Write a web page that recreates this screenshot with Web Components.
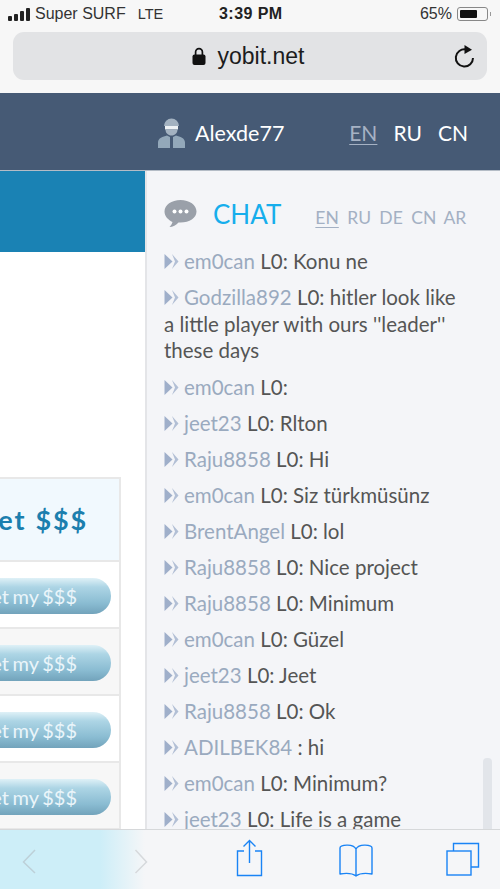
<!DOCTYPE html>
<html><head><meta charset="utf-8"><style>
html,body{margin:0;padding:0;height:889px;overflow:hidden;background:#fff}
body{font-family:Lato,"Liberation Sans",sans-serif}
</style></head><body>
<phone-page></phone-page>
<script>
function def(name,html){customElements.define(name,class extends HTMLElement{constructor(){super();this.attachShadow({mode:'open'}).innerHTML=html}})}
def('status-bar',`<style>
:host{display:flex;align-items:center;height:28px;padding:0 12px 0 8px;font:16px "Liberation Sans",sans-serif;color:#333;position:relative}
.sig{display:flex;align-items:flex-end;gap:2px;height:13px;margin-right:5px;width:22px}.sig i{width:4px;background:#222;border-radius:1px}
.t{position:absolute;left:219px;top:5px;font-weight:700;color:#222;font-size:16px;letter-spacing:.45px}
.r{margin-left:auto;display:flex;align-items:center;gap:5px}
.lte{margin-left:12px;font-size:14.5px}
.bat{width:31px;height:14px;border:1px solid #888;border-radius:3px;box-sizing:border-box;padding:2px;position:relative}
.bat i{display:block;height:100%;width:68%;background:#111;border-radius:1px}
.bat:after{content:"";position:absolute;right:-4px;top:4px;width:1px;height:4px;background:#999}
</style><span class="sig"><i style="height:5px"></i><i style="height:7px"></i><i style="height:10px"></i><i style="height:13px"></i></span><span>Super SURF</span><span class="lte">LTE</span><span class="t">3:39 PM</span><span class="r">65%<span class="bat"><i></i></span></span>`);
def('url-bar',`<style>
:host{display:block;height:65px;padding:4px 13px 0;box-sizing:border-box}
.b{height:48px;background:#e2e3e5;border-radius:11px;display:flex;align-items:center;justify-content:center;position:relative;font:23px "Liberation Sans",sans-serif;color:#1c1c1c;gap:12px;padding-right:4px}
svg{display:block}.re{position:absolute;right:12px;top:12px}
</style><div class="b"><svg width="14" height="20" viewBox="0 0 14 20"><path d="M3.6 9V6a3.4 3.4 0 0 1 6.8 0v3" fill="none" stroke="#111" stroke-width="1.7"/><rect x="0.5" y="8.500" width="13" height="10.500" rx="2" fill="#111"/></svg><span>yobit.net</span><svg class="re" width="22" height="24" viewBox="0 0 22 24"><path d="M13 5.500A8.600 8.600 0 1 0 20 14" fill="none" stroke="#111" stroke-width="2"/><path d="M11.500 1 19 5.800 11.500 10z" fill="#111"/></svg></div>`);
def('site-header',`<style>
:host{display:flex;align-items:center;height:78px;box-sizing:border-box;background:#465a75;color:#fff;padding:2px 32px 0 157px;font:22px Lato,sans-serif;border-bottom:1px solid #b4bcc6}
svg{margin-right:9px}.n{margin-right:auto;font-size:21.5px}
a{margin-left:16px;font-size:21px}a.on{color:#a6b2c4;text-decoration:underline;text-underline-offset:3px;text-decoration-thickness:1px}
</style><svg width="29" height="30" viewBox="0 0 29 30"><path d="M7 8a7.500 7.500 0 0 1 15 0z" fill="#a3b2c1"/><path d="M8 8h13v3.500H8z" fill="#eef2f5"/><path d="M8.500 11.500h12c0 3.500-2.500 6-6 6s-6-2.500-6-6z" fill="#a3b2c1"/><path d="M1 30v-5.500c0-4.500 5-6 9-7l3 1.500v11zM28 30v-5.500c0-4.500-5-6-9-7l-3 1.500v11z" fill="#93a8ba"/></svg><span class="n">Alexde77</span><a class="on">EN</a><a>RU</a><a>CN</a>`);
def('get-row',`<style>
:host{display:flex;justify-content:flex-end;align-items:center;height:67px;box-sizing:border-box;width:121px;border-right:2px solid #e8e8e8;border-bottom:2px solid #e8e8e8;padding:3px 8px 0 0;overflow:hidden;background:var(--bg,#fff)}
.btn{flex:none;width:160px;height:36px;border-radius:18px;background:linear-gradient(#dff1f7 0,#add5e5 25%,#8abcd2 70%,#72a3bb 100%);color:#eaf5fa;font:20px Lato,sans-serif;word-spacing:-1.5px;display:flex;align-items:center;justify-content:flex-end;padding-right:34px;box-sizing:border-box;white-space:nowrap}
</style><div class="btn">Get my $$$</div>`);
def('left-col',`<style>
:host{display:block;width:145px;flex:none;overflow:hidden;background:#fff}
.blue{height:81px;background:#1a82b4}
.sp{height:225px}
.h{width:121px;height:85px;box-sizing:border-box;background:#f1f9fe;border-top:2px solid #e8e8e8;border-right:2px solid #e8e8e8;border-bottom:2px solid #e8e8e8;display:flex;justify-content:flex-end;align-items:center;padding-right:31px;overflow:hidden;color:#1c7fae;font:700 27px Lato,sans-serif;white-space:nowrap;letter-spacing:1.8px;word-spacing:1px}
.h span{flex:none}
</style><div class="blue"></div><div class="sp"></div><div class="h"><span>Get $$$</span></div><get-row></get-row><get-row style="--bg:#f7f7f7"></get-row><get-row></get-row><get-row style="--bg:#f7f7f7"></get-row>`);
def('chat-msg',`<style>
:host{display:block;margin-bottom:10px;line-height:26px;font-size:20.5px;color:#555}
svg{vertical-align:-1px;margin-right:5px}
.u{color:#9aaabf}
</style><svg width="15" height="17" viewBox="0 0 15 17"><path d="M0.500 1l8 7.500-8 7.500z" fill="#9fafca"/><path d="M8 1l6.500 7.500L8 16l3-7.500z" fill="#b2bfd5"/></svg><span class="u"><slot name="u"></slot></span> <slot></slot>`);
def('chat-panel',`<style>
:host{display:block;flex:1;min-width:0;background:#f4f5f8;border-left:2px solid #e4e5e8;box-sizing:border-box;padding:0 30px 0 17px;position:relative;overflow:hidden}
.head{display:flex;align-items:center;height:78px;box-sizing:border-box;padding-top:7px;margin-bottom:-1px;white-space:nowrap}
.t{color:#16aeec;font-size:26px;margin:0 34px 0 16px}
svg{flex:none}
.l{color:#a3b0c3;font-size:17.5px;margin-right:9px;padding-top:7px;width:23px;flex:none;text-align:center}.l.on{text-decoration:underline;text-underline-offset:3px;text-decoration-thickness:1px}
.bar{position:absolute;right:8px;top:587px;bottom:-8px;width:9px;background:#e2e5ea;border-radius:4px}
</style><div class="head"><svg width="33" height="29" viewBox="0 0 33 29"><path d="M16.500 1C7.500 1 .5 6 .5 12.500c0 5 4 8.500 8 10.500-.5 2-2 4-3 5 3 0 7-2 9-4.500h2c9 0 16-4.500 16-11S25.500 1 16.500 1z" fill="#9aa0a9"/><circle cx="10.500" cy="12.500" r="2" fill="#fff"/><circle cx="16.500" cy="12.500" r="2" fill="#fff"/><circle cx="22.500" cy="12.500" r="2" fill="#fff"/></svg><span class="t">CHAT</span><span class="l on">EN</span><span class="l">RU</span><span class="l">DE</span><span class="l">CN</span><span class="l">AR</span></div><slot></slot><div class="bar"></div>`);
def('safari-bar',`<style>
:host{position:absolute;left:0;right:0;bottom:0;height:60px;box-sizing:border-box;border-top:1px solid #d6d8da;background:linear-gradient(90deg,#cdeef8 0,#cdeef8 20%,#f5f6f8 29%,#f5f6f8 100%);display:block}
svg{position:absolute;top:0;left:0}
</style><svg width="500" height="59" viewBox="0 0 500 59" fill="none"><path d="M35 20 23.500 32 35 43" stroke="#bdd0d8" stroke-width="1.500"/><path d="M135.500 20l11 12-11 11" stroke="#d6d9dc" stroke-width="1.500"/><g stroke="#1a84f5" stroke-width="1.400"><path d="M244 21H237.500V45.500H261.500V21H255"/><path d="M249.500 33V11M243.500 16.500l6-6 6 6"/><path d="M356 46c-4-3-10-3-16-2V18c0-3 13-5 16 1zm0 0c4-3 10-3 16-2V18c0-3-13-5-16 1z" stroke-linejoin="round"/><rect x="447" y="21" width="24" height="24"/><path d="M453.500 21v-7.500h25V37h-7.500"/></g></svg>`);
def('phone-page',`<style>
:host{display:flex;flex-direction:column;height:889px;position:relative;overflow:hidden;font-family:Lato,sans-serif}
.top{background:#f7f7f7}
.main{display:flex;flex:1;min-height:0}
</style><div class="top"><status-bar></status-bar><url-bar></url-bar></div><site-header></site-header><div class="main"><left-col></left-col><chat-panel>
<chat-msg><span slot="u">em0can</span>L0: Konu ne</chat-msg>
<chat-msg style="line-height:26.5px"><span slot="u">Godzilla892</span>L0: hitler look like a little player with ours ''leader'' these days</chat-msg>
<chat-msg><span slot="u">em0can</span>L0:</chat-msg>
<chat-msg><span slot="u">jeet23</span>L0: Rlton</chat-msg>
<chat-msg><span slot="u">Raju8858</span>L0: Hi</chat-msg>
<chat-msg><span slot="u">em0can</span>L0: Siz türkmüsünz</chat-msg>
<chat-msg><span slot="u">BrentAngel</span>L0: lol</chat-msg>
<chat-msg><span slot="u">Raju8858</span>L0: Nice project</chat-msg>
<chat-msg><span slot="u">Raju8858</span>L0: Minimum</chat-msg>
<chat-msg><span slot="u">em0can</span>L0: Güzel</chat-msg>
<chat-msg><span slot="u">jeet23</span>L0: Jeet</chat-msg>
<chat-msg><span slot="u">Raju8858</span>L0: Ok</chat-msg>
<chat-msg><span slot="u">ADILBEK84</span>: hi</chat-msg>
<chat-msg><span slot="u">em0can</span>L0: Minimum?</chat-msg>
<chat-msg><span slot="u">jeet23</span>L0: Life is a game</chat-msg>
</chat-panel></div><safari-bar></safari-bar>`);
</script></body></html>
